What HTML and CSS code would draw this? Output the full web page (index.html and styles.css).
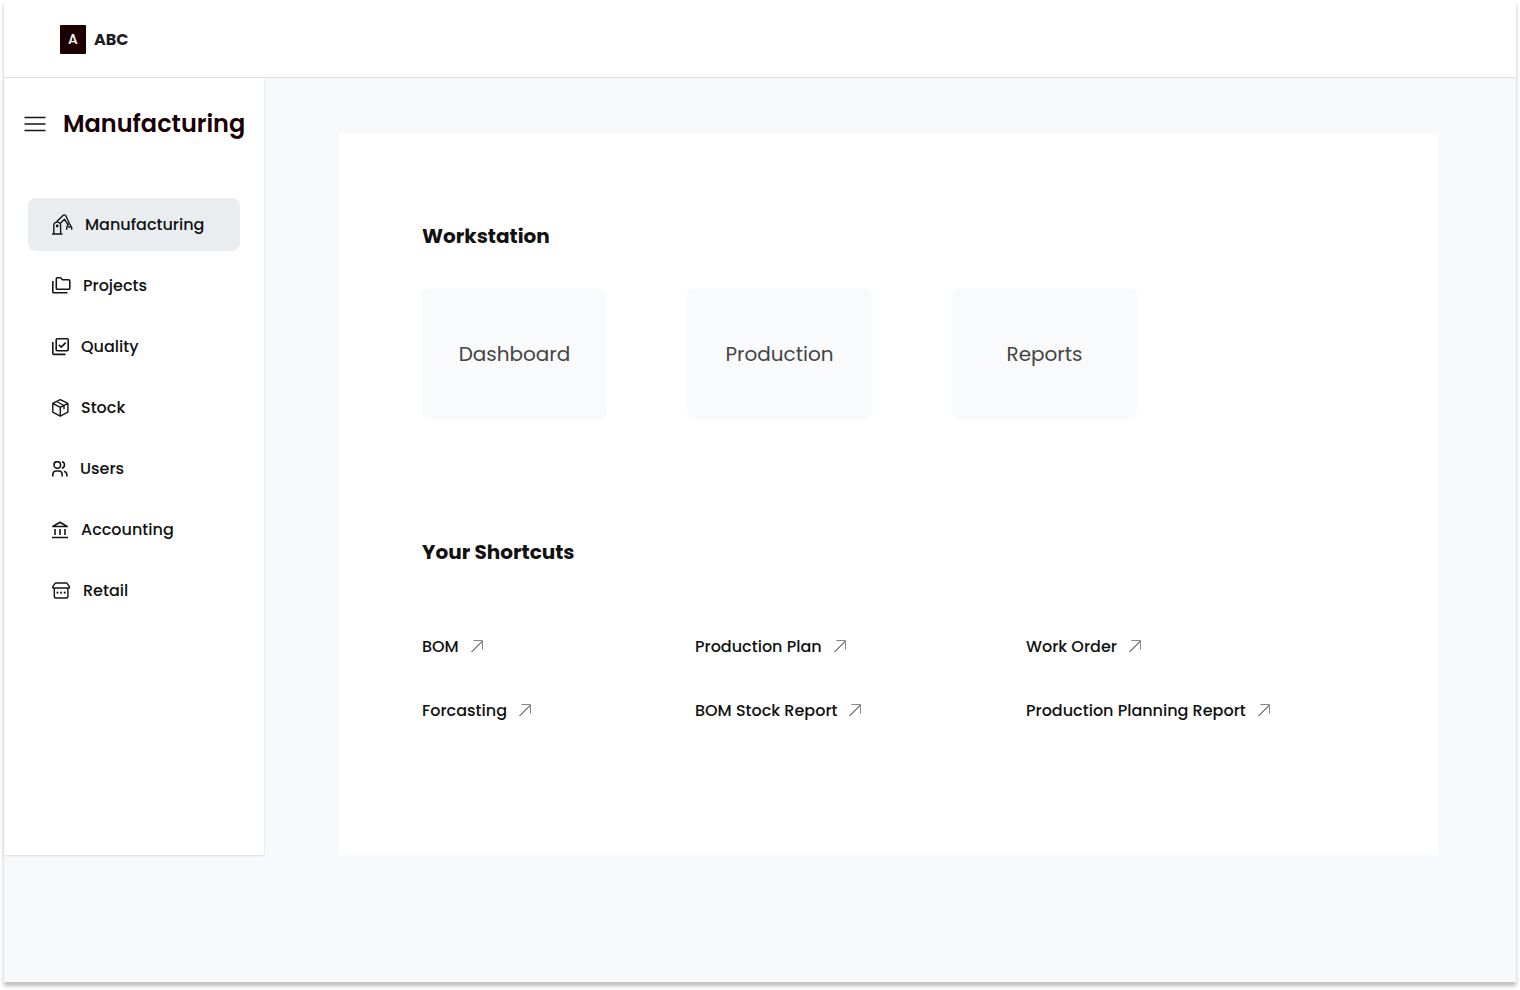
FILE: index.html
```html
<!DOCTYPE html>
<html lang="en">
<head>
<meta charset="utf-8">
<meta name="viewport" content="width=device-width, initial-scale=1">
<title>ABC Manufacturing</title>
<link rel="stylesheet" href="styles.css">
</head>
<body>
<svg class="sprite" aria-hidden="true">
  <symbol id="arrow" viewBox="0 0 14 14"><path d="M.5 12 11.500 1"/><path class="faint" d="M2.500.5h9v9"/></symbol>
</svg>
<div class="app">
  <header class="topbar">
    <a class="brand" href="#"><span class="brand-mark">A</span><span class="brand-name">ABC</span></a>
  </header>
  <div class="body">
    <aside class="sidebar">
      <div class="sidebar-head">
        <button class="menu-button" type="button" aria-label="Toggle menu">
          <svg width="22" height="16" viewBox="0 0 22 16"><path d="M.5 1.500h21M.5 8h21M.5 14.500h21"/></svg>
        </button>
        <h1 class="sidebar-title">Manufacturing</h1>
      </div>
      <nav class="nav">
        <a class="nav-item active" href="#" aria-current="page">
          <svg class="thin" width="21" height="21" viewBox="0 0 21 21"><path d="M0 20h10.500M1.800 20v-8.500a3.400 3.400 0 0 1 6.800 0V20M4.500 7.800 11 1.400q1.600-1.200 2.800.4l3.700 8M8.200 9.500l4.300-4.200 3.300 5M15.800 10.300l1.700-.7M16 10.500l-1.300 3v2.200M17.700 10l2 3.500v2.200M16 13h2.500"/><circle cx="5.200" cy="12" r=".7"/></svg>
          Manufacturing
        </a>
        <a class="nav-item" href="#">
          <svg width="19" height="17" viewBox="0 0 19 17"><path d="M4.300 1.800q0-1 1-1h3.200l2 2h6q1.300 0 1.300 1.300v7.100q0 1.100-1.100 1.100H5.400q-1.100 0-1.100-1.100zM.8 4v10.700q0 1.100 1.100 1.100H15.500"/></svg>
          Projects
        </a>
        <a class="nav-item" href="#">
          <svg width="17" height="18" viewBox="0 0 17 18"><rect x="4.200" y=".8" width="12" height="12" rx="1"/><path d="M.8 4v11.200q0 1.200 1.200 1.200H13.500M6.800 6.700l2.400 2.400 4.500-4.500"/></svg>
          Quality
        </a>
        <a class="nav-item" href="#">
          <svg class="thin" width="17" height="18" viewBox="0 0 17 18"><path d="M8.300.6 15.900 4.300v8.900L8.300 17.200.8 13.200V4.300zM.8 4.300l7.500 4 7.600-4M8.300 8.300v8.900M4.500 2.500l7.500 4v3.800"/></svg>
          Stock
        </a>
        <a class="nav-item" href="#">
          <svg width="16" height="16" viewBox="0 0 16 16"><circle cx="5.300" cy="3.900" r="3.300"/><path d="M.8 15.500v-1.800Q.8 10 4.300 10h2.300q3.600 0 3.600 3.700v1.800M10 .7a3.300 3.300 0 0 1 0 6.400M12 10.200q2.900.8 2.900 3.700v1.600"/></svg>
          Users
        </a>
        <a class="nav-item" href="#">
          <svg width="17" height="18" viewBox="0 0 17 18"><path d="M.8 5.500 8 1.300l7.200 4.200zM0 16.500h16M3 8v6M8 8v6M13 8v6"/></svg>
          Accounting
        </a>
        <a class="nav-item" href="#">
          <svg class="thin" width="19" height="17" viewBox="0 0 19 17"><path d="M4 1h10.200q.8 0 1.300.8l2 3q.2 1.200-1 1.200H1.700Q.5 6 .7 4.800l2-3Q3.200 1 4 1zM2.300 6v8.200Q2.300 16 4.100 16h10q1.800 0 1.800-1.800V6"/><path class="dots" d="M5.500 10.600v.1M9.100 10.600v.1M12.700 10.600v.1"/></svg>
          Retail
        </a>
      </nav>
    </aside>
    <main class="panel">
      <section class="workstation">
        <h2 class="section-title">Workstation</h2>
        <div class="cards">
          <a class="card" href="#">Dashboard</a>
          <a class="card" href="#">Production</a>
          <a class="card" href="#">Reports</a>
        </div>
      </section>
      <section>
        <h2 class="section-title">Your Shortcuts</h2>
        <div class="shortcuts">
          <a class="shortcut" href="#">BOM <svg><use href="#arrow"/></svg></a>
          <a class="shortcut" href="#">Production Plan <svg><use href="#arrow"/></svg></a>
          <a class="shortcut" href="#">Work Order <svg><use href="#arrow"/></svg></a>
          <a class="shortcut" href="#">Forcasting <svg><use href="#arrow"/></svg></a>
          <a class="shortcut" href="#">BOM Stock Report <svg><use href="#arrow"/></svg></a>
          <a class="shortcut" href="#">Production Planning Report <svg><use href="#arrow"/></svg></a>
        </div>
      </section>
    </main>
  </div>
</div>
</body>
</html>
```
FILE: styles.css
```css
* {
  box-sizing: border-box;
}

body {
  margin: 0;
  padding: 0 4px 8px;
  min-height: 100vh;
  display: flex;
  background: #fff;
  color: #111;
  font-family: Poppins, Inter, sans-serif;
  font-size: 16px;
  font-weight: 500;
  line-height: 24px;
}

a {
  color: inherit;
  text-decoration: none;
}

svg {
  flex: none;
  fill: none;
  stroke: #151515;
  stroke-width: 1.6;
  stroke-linejoin: round;
}

.sprite {
  position: absolute;
  width: 0;
  height: 0;
}

.app {
  flex: 1;
  background: #f8f9fb;
  box-shadow: 0 4px 4px rgba(0, 0, 0, 0.25);
}

.topbar {
  display: flex;
  align-items: center;
  height: 78px;
  padding: 2px 56px 0;
  background: #fff;
  border-bottom: 1px solid #e0e0e0;
}

.brand {
  display: flex;
  align-items: center;
  gap: 8px;
}

.brand-mark {
  width: 26px;
  padding: 2px 0 3px;
  border-radius: 1px;
  background: #1d0002;
  color: #fff;
  font-size: 14px;
  text-align: center;
}

.brand-name {
  color: #1d1d1f;
  font-weight: 700;
}

.body {
  display: flex;
  align-items: stretch;
  padding-bottom: 127px;
}

.sidebar {
  flex: 0 0 260px;
  padding: 28px 16px 28px 20px;
  background: #fff;
  box-shadow: 0 1px 2px rgba(0, 0, 0, 0.12);
}

.sidebar-head {
  display: flex;
  align-items: center;
  gap: 17px;
  height: 36px;
}

.menu-button {
  display: flex;
  padding: 0;
  border: 0;
  background: none;
}

.sidebar-title {
  margin: 0;
  color: #190003;
  font-size: 24px;
  font-weight: 600;
}

.nav {
  display: flex;
  flex-direction: column;
  gap: 8px;
  margin: 56px 8px 0 4px;
}

.nav-item {
  display: flex;
  align-items: center;
  gap: 12px;
  height: 53px;
  padding: 0 24px;
  border-radius: 8px;
}

.active {
  background: #e9edf0;
}

.thin {
  stroke-width: 1.4;
}

.dots {
  stroke-width: 2;
  stroke-linecap: round;
}

.panel {
  flex: 1;
  margin: 55px 78px 0 75px;
  padding: 88px 83px 132px;
  background: #fff;
}

.workstation {
  margin-bottom: 117px;
}

.section-title {
  margin: 0;
  font-size: 20px;
  font-weight: 700;
  line-height: 30px;
}

.cards {
  display: flex;
  flex-wrap: wrap;
  gap: 80px;
  margin-top: 37px;
}

.card {
  display: flex;
  align-items: center;
  justify-content: center;
  width: 185px;
  height: 132px;
  border-radius: 8px;
  background: #f9fafc;
  color: #444;
  font-size: 20px;
  font-weight: 400;
}

.shortcuts {
  display: grid;
  grid-template-columns: 273px 331px auto;
  row-gap: 40px;
  margin-top: 68px;
}

.shortcut {
  display: flex;
  align-items: center;
  gap: 12px;
}

.shortcut svg {
  width: 14px;
  height: 14px;
  stroke-width: 1;
}

.faint {
  stroke: #888;
}
```
